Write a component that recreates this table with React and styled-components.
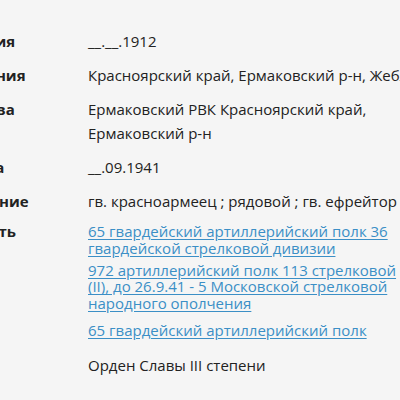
import React from "react";
import styled, { createGlobalStyle } from "styled-components";

const GlobalStyle = createGlobalStyle`
  html, body {
    margin: 0;
    padding: 0;
    background: #f5f5f5;
    overflow: hidden;
  }
  body {
    font-family: "Open Sans", "Noto Sans", sans-serif;
    color: #222;
  }
`;

const Table = styled.div`
  display: flex;
  flex-direction: column;
  gap: 10px;
  margin-left: -107px;
  padding-top: 29px;
  width: 507px;
`;

const Row = styled.div`
  display: grid;
  grid-template-columns: 195px 312px;
  align-items: first baseline;
`;

const Label = styled.div`
  font-size: 15px;
  font-weight: 700;
  line-height: ${(p) => (p.$compact ? "16.5px" : "24px")};
  white-space: nowrap;
  overflow: hidden;
`;

const Value = styled.div`
  font-size: 15px;
  line-height: 24px;
  white-space: ${(p) => (p.$nowrap ? "nowrap" : "normal")};
`;

const Links = styled.div`
  display: flex;
  flex-direction: column;
  gap: 5.5px;
`;

const Link = styled.a`
  font-size: 15px;
  line-height: 16.5px;
  color: #3b8fc6;
  text-decoration: underline;
  text-underline-offset: 2px;
  margin-top: ${(p) => (p.$spaced ? "5px" : "0")};
`;

const Award = styled.div`
  font-size: 15px;
  line-height: 24px;
  margin-top: 15px;
`;

const rows = [
  { label: "Дата рождения", value: "__.__.1912" },
  {
    label: "Место рождения",
    value: "Красноярский край, Ермаковский р-н, Жеблахты",
    nowrap: true,
  },
  {
    label: "Место призыва",
    value: "Ермаковский РВК Красноярский край, Ермаковский р-н",
  },
  { label: "Дата призыва", value: "__.09.1941" },
  {
    label: "Воинское звание",
    value: "гв. красноармеец ; рядовой ; гв. ефрейтор",
  },
];

const units = [
  "65 гвардейский артиллерийский полк 36 гвардейской стрелковой дивизии",
  "972 артиллерийский полк 113 стрелковой (II), до 26.9.41 - 5 Московской стрелковой народного ополчения",
  "65 гвардейский артиллерийский полк",
];

export default function App() {
  return (
    <>
      <GlobalStyle />
      <Table>
        {rows.map((r) => (
          <Row key={r.label}>
            <Label>{r.label}</Label>
            <Value $nowrap={r.nowrap}>{r.value}</Value>
          </Row>
        ))}
        <Row>
          <Label $compact>Воинская часть</Label>
          <div>
            <Links>
              {units.map((u, i) => (
                <Link key={u} href="#" $spaced={i === units.length - 1}>
                  {u}
                </Link>
              ))}
            </Links>
            <Award>Орден Славы III степени</Award>
          </div>
        </Row>
      </Table>
    </>
  );
}
